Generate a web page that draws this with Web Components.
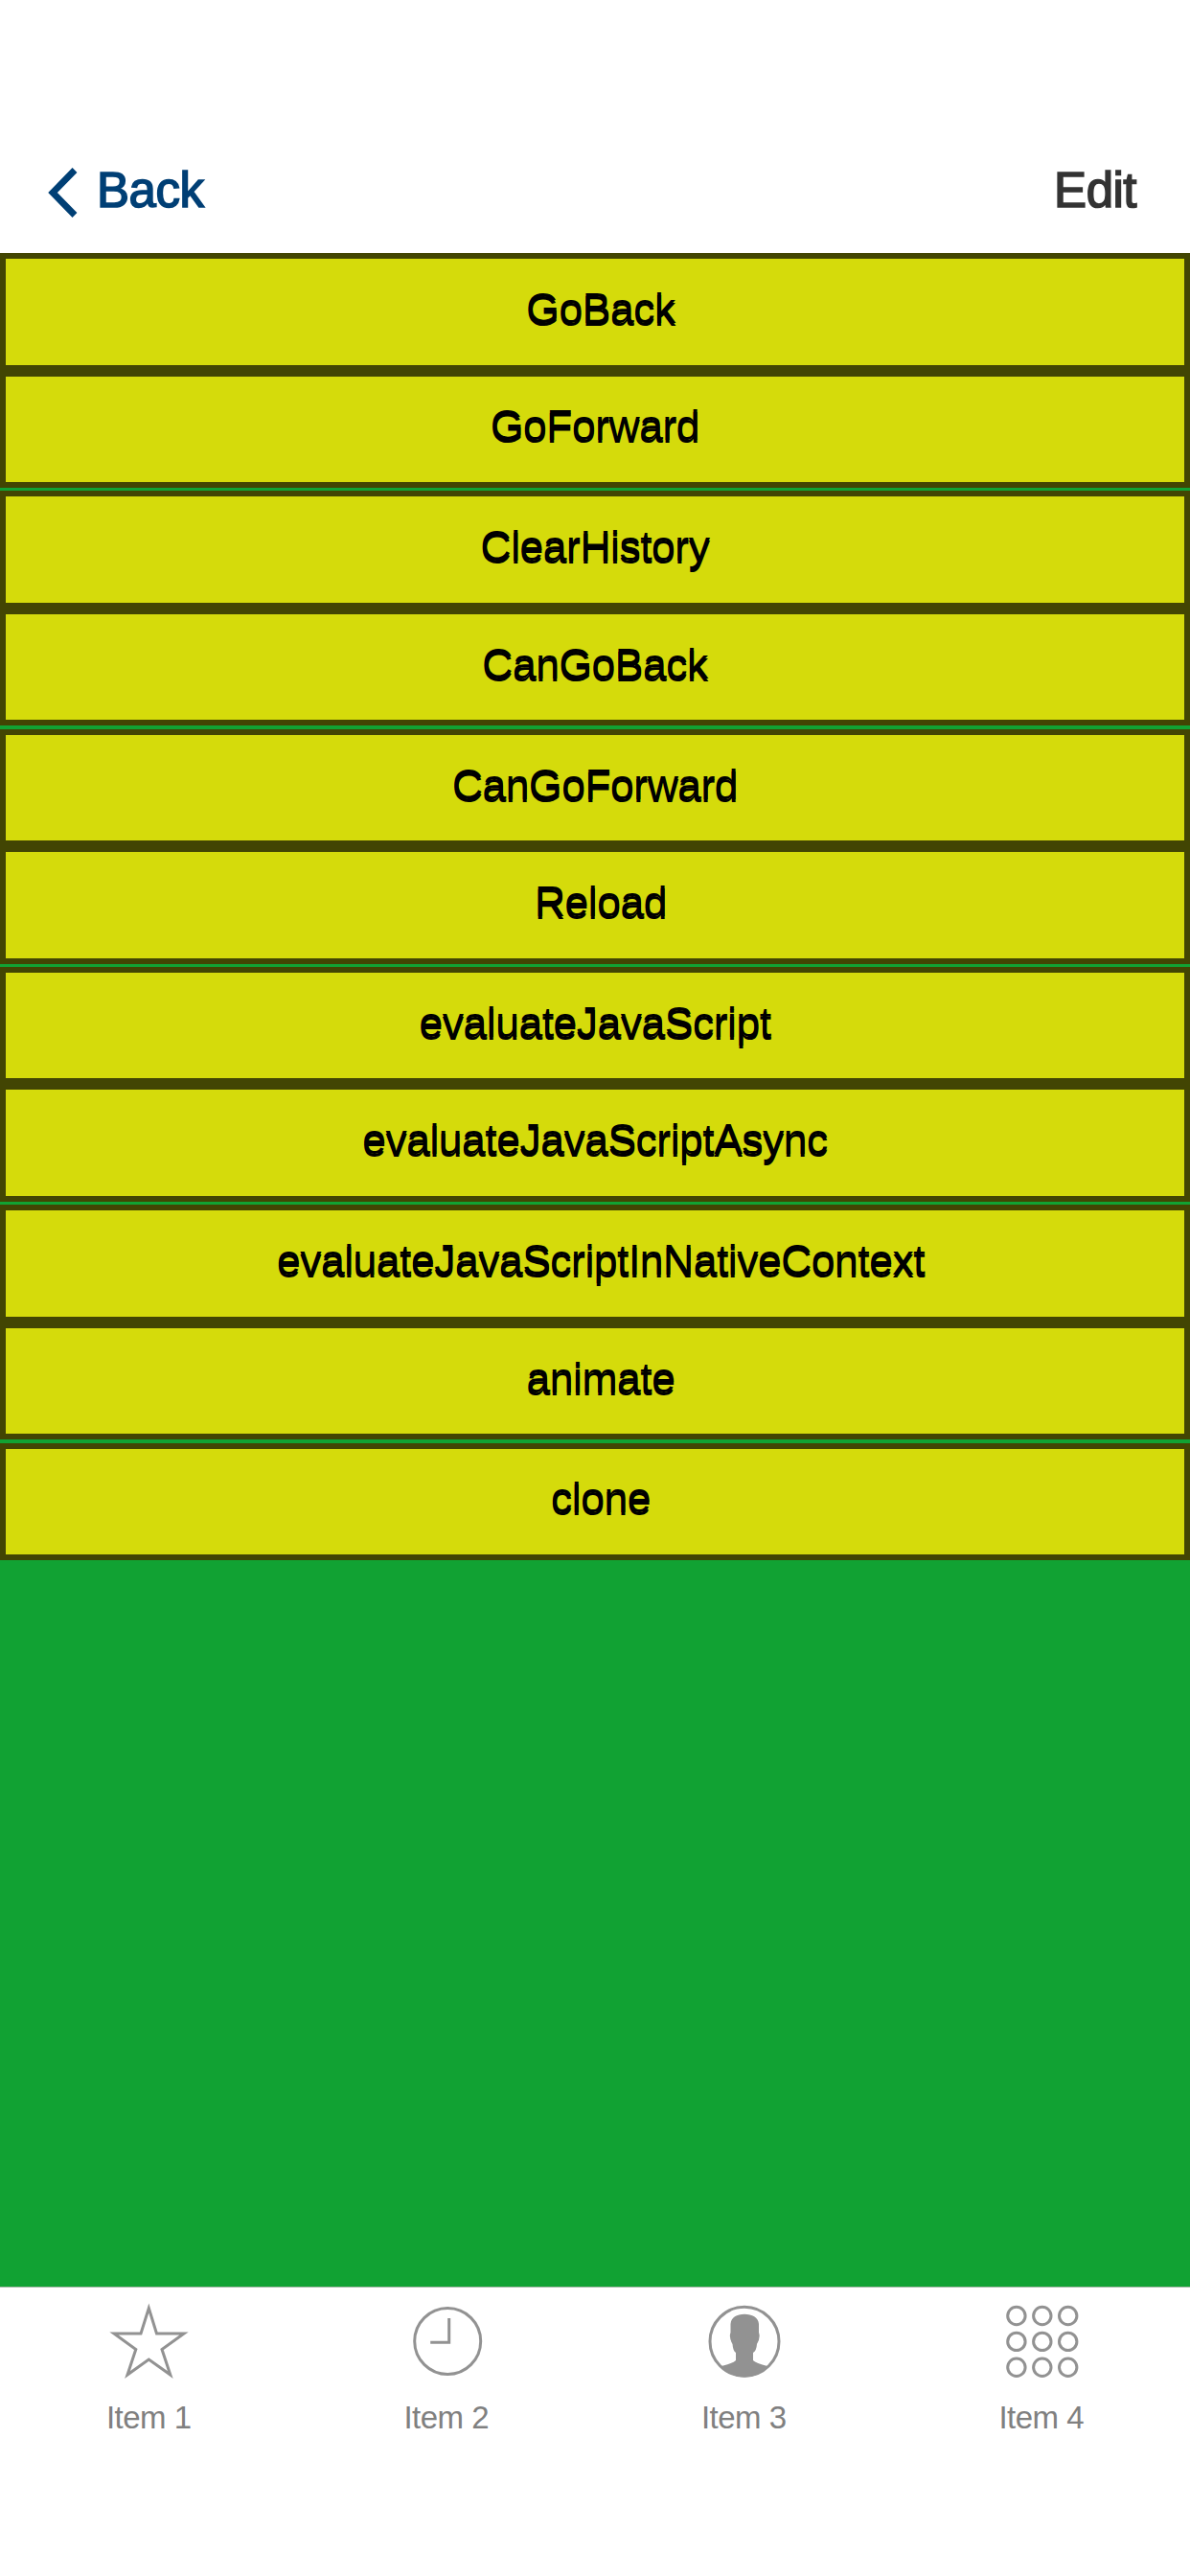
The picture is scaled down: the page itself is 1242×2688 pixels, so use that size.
<!DOCTYPE html>
<html lang="en"><head><meta charset="utf-8"><title>WebView</title>
<style>html,body{margin:0;height:100%}body{background:#fff;font-family:"Liberation Sans",Arial,sans-serif}</style></head>
<body><web-view-screen></web-view-screen>
<script>
const define=(name,html)=>customElements.define(name,class extends HTMLElement{
  constructor(){super();this.attachShadow({mode:'open'}).innerHTML=html;}
});
define('nav-bar',`<style>:host{display:flex;justify-content:space-between;align-items:flex-start;box-sizing:border-box;height:264px;padding:170px 56px 0 50px;background:#fff;font-size:51px;line-height:57px;letter-spacing:-.5px}
.back{display:flex;color:#003f75;-webkit-text-stroke:1.6px #003f75}svg{display:block;margin:5px 19px 0 0}.edit{color:#333;-webkit-text-stroke:1.6px #333}</style>
<div class="back"><svg width="32" height="52" viewBox="0 0 32 52"><path d="M28 2.5L5 26L28 49.5" fill="none" stroke="#003f75" stroke-width="6.8"/></svg><span><slot name="back"></slot></span></div><span class="edit"><slot name="edit"></slot></span>`);
define('action-button',`<style>:host{display:flex;justify-content:center;box-sizing:border-box;border:6px solid #424503;background:#d5db0b;color:#000;font-size:44.5px;letter-spacing:-.5px;line-height:50px;padding:27px 0 0;text-shadow:0 3px 0 #000}:host([inset]){padding-left:12px}:host([raised]){padding-top:26px}</style><span><slot></slot></span>`);
define('button-pair',`<style>:host{display:grid;grid-template-rows:var(--rows,123px 122px)}</style><slot></slot>`);
define('tab-item',`<style>:host{flex:1;display:flex;flex-direction:column;align-items:center;color:#808080;font-size:33px;line-height:38px;letter-spacing:-.5px}
.icon{height:113px;display:block}::slotted(svg){display:block}</style><div class="icon"><slot name="icon"></slot></div><span><slot></slot></span>`);
define('tab-bar',`<style>:host{display:flex;box-sizing:border-box;height:302px;background:#fff;border-top:1px solid #a3b5a5;padding-top:4px}</style><slot></slot>`);
define('web-view-screen',`<style>:host{display:flex;flex-direction:column;height:2688px;width:1242px;background:#fff}
main{flex:1;display:flex;flex-direction:column;background:#11a233;gap:3px}svg{fill:none;stroke:#929292;stroke-width:3}</style>
<nav-bar><span slot="back">Back</span><span slot="edit">Edit</span></nav-bar>
<main>
<button-pair><action-button inset>GoBack</action-button><action-button raised>GoForward</action-button></button-pair>
<button-pair><action-button>ClearHistory</action-button><action-button>CanGoBack</action-button></button-pair>
<button-pair style="margin-top:1px;--rows:122px 123px"><action-button>CanGoForward</action-button><action-button inset>Reload</action-button></button-pair>
<button-pair style="--rows:122px 123px"><action-button>evaluateJavaScript</action-button><action-button>evaluateJavaScriptAsync</action-button></button-pair>
<button-pair><action-button inset>evaluateJavaScriptInNativeContext</action-button><action-button inset>animate</action-button></button-pair>
<button-pair style="margin-top:1px;--rows:122px"><action-button inset raised>clone</action-button></button-pair>
</main>
<tab-bar>
<tab-item><svg slot="icon" width="90" height="100" viewBox="0 0 90 100"><path d="M45.3 17.5L53.5 44H82L59 60.5L67.8 87L45.3 71L23 87L31.8 60.5L9 44H37Z"/></svg>Item 1</tab-item>
<tab-item><svg slot="icon" width="90" height="100" viewBox="0 0 90 100"><circle cx="46.2" cy="52" r="34.5"/><path d="M28.2 53.3H47.7V28"/></svg>Item 2</tab-item>
<tab-item><svg slot="icon" width="90" height="100" viewBox="0 0 90 100"><circle cx="46" cy="52.3" r="36"/><path fill="#929292" stroke="none" d="M31.5 34C32 27 38 23.7 46 23.7S60.5 27 61 34V43Q63 48 59 55Q58.5 62 55 64V72Q58 75 70 78Q61 89.5 46 89.5T22 78Q34 75 37 72V64Q34 62 33.5 55Q29.5 48 31.5 43Z"/></svg>Item 3</tab-item>
<tab-item><svg slot="icon" width="90" height="100" viewBox="0 0 90 100"><g><circle cx="18.9" cy="25.5" r="9.2"/><circle cx="45.8" cy="25.5" r="9.2"/><circle cx="72.7" cy="25.5" r="9.2"/><circle cx="18.9" cy="52.4" r="9.2"/><circle cx="45.8" cy="52.4" r="9.2"/><circle cx="72.7" cy="52.4" r="9.2"/><circle cx="18.9" cy="79.3" r="9.2"/><circle cx="45.8" cy="79.3" r="9.2"/><circle cx="72.7" cy="79.3" r="9.2"/></g></svg>Item 4</tab-item>
</tab-bar>`);
</script></body></html>
